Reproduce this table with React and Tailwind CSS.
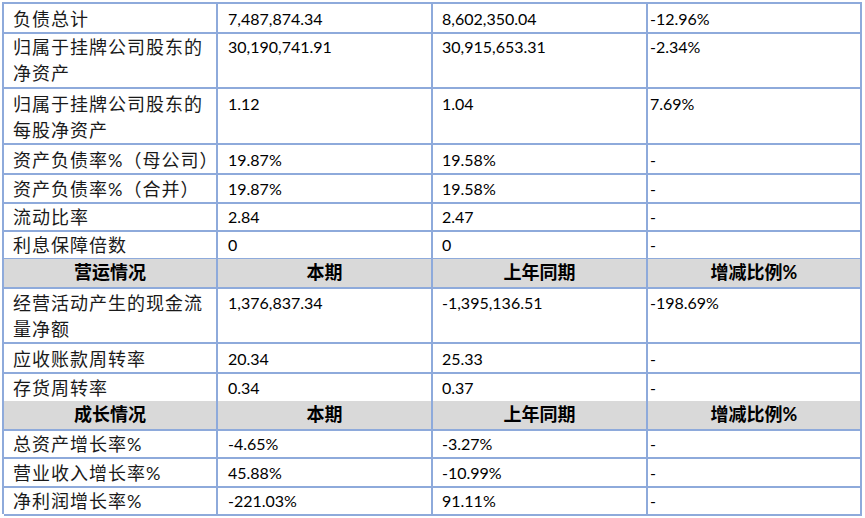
import React from "react";

const rows = [
  { h: 28, label: ["负债总计"], vals: ["7,487,874.34", "8,602,350.04", "-12.96%"] },
  { h: 57, label: ["归属于挂牌公司股东的", "净资产"], vals: ["30,190,741.91", "30,915,653.31", "-2.34%"] },
  { h: 56, label: ["归属于挂牌公司股东的", "每股净资产"], vals: ["1.12", "1.04", "7.69%"] },
  { h: 29, label: ["资产负债率%（母公司）"], vals: ["19.87%", "19.58%", "-"] },
  { h: 28, label: ["资产负债率%（合并）"], vals: ["19.87%", "19.58%", "-"] },
  { h: 28, label: ["流动比率"], vals: ["2.84", "2.47", "-"] },
  { h: 29, label: ["利息保障倍数"], vals: ["0", "0", "-"] },
  { h: 29, header: "营运情况" },
  { h: 56, label: ["经营活动产生的现金流", "量净额"], vals: ["1,376,837.34", "-1,395,136.51", "-198.69%"] },
  { h: 29, label: ["应收账款周转率"], vals: ["20.34", "25.33", "-"] },
  { h: 28, label: ["存货周转率"], vals: ["0.34", "0.37", "-"] },
  { h: 28, header: "成长情况" },
  { h: 29, label: ["总资产增长率%"], vals: ["-4.65%", "-3.27%", "-"] },
  { h: 28, label: ["营业收入增长率%"], vals: ["45.88%", "-10.99%", "-"] },
  { h: 28, label: ["净利润增长率%"], vals: ["-221.03%", "91.11%", "-"] },
];

const font = { fontFamily: "Lato, 'Noto Sans CJK SC', sans-serif" };
const cell = "border-r-2 border-b-2 border-[#8eaadb] box-border";

function HeaderRow({ row }) {
  const titles = [row.header, "本期", "上年同期", "增减比例%"];
  return (
    <div className="grid grid-cols-[214px_215px_215px_214px]" style={{ height: row.h }}>
      {titles.map((t, i) => (
        <div
          key={i}
          className={`${cell} bg-[#d9d9d9] flex items-center justify-center text-[18px] font-bold text-black pb-[1px]`}
        >
          {t}
        </div>
      ))}
    </div>
  );
}

function DataRow({ row }) {
  return (
    <div className="grid grid-cols-[214px_215px_215px_214px]" style={{ height: row.h }}>
      <div className={`${cell} pl-[9px] pt-[2px] text-[18px] leading-[26px] tracking-[1px] text-[#1a1a1a]`}>
        {row.label.map((l, i) => (
          <div key={i} className="whitespace-nowrap">{l}</div>
        ))}
      </div>
      <div className={`${cell} pl-[10px] pt-[2px] text-[16px] leading-[26px] text-black`}>{row.vals[0]}</div>
      <div className={`${cell} pl-[9px] pt-[2px] text-[16px] leading-[26px] text-black`}>{row.vals[1]}</div>
      <div className={`${cell} pl-[2px] pt-[2px] text-[16px] leading-[26px] text-black`}>{row.vals[2]}</div>
    </div>
  );
}

export default function App() {
  return (
    <div className="w-[865px] h-[518px] bg-white pt-[2px] pl-[2px]" style={font}>
      <div className="w-[860px] border-l-2 border-t-2 border-[#8eaadb]">
        {rows.map((row, i) =>
          row.header ? <HeaderRow key={i} row={row} /> : <DataRow key={i} row={row} />
        )}
      </div>
    </div>
  );
}
